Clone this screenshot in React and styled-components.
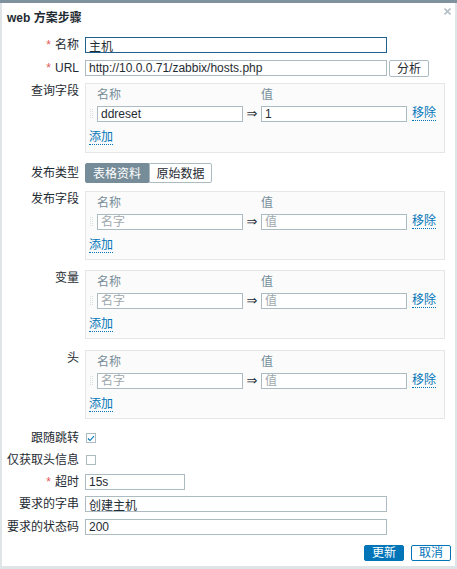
import React from "react";
import styled, { createGlobalStyle } from "styled-components";

const Global = createGlobalStyle`
  html, body { margin: 0; padding: 0; }
  body {
    background: #dfe4e7;
    font-family: "Liberation Sans", Arial, "Noto Sans CJK SC", sans-serif;
    font-size: 12px;
    color: #1f2c33;
  }
`;

const FONT = `"Liberation Sans", Arial, "Noto Sans CJK SC", sans-serif`;

const Page = styled.div`
  height: 569px;
  box-sizing: border-box;
  border-top: 3px solid #7f929d;
  padding: 0 2px 3px 2px;
  display: flex;
`;

const Dialog = styled.div`
  position: relative;
  width: 453px;
  height: 563px;
  box-sizing: border-box;
  background: #fff;
  padding: 8px 4px 5px 5px;
  display: flex;
  flex-direction: column;
`;

const Title = styled.h4`
  margin: 0;
  font-size: 12px;
  line-height: 14px;
  font-weight: bold;
  font-family: ${FONT};
  color: #1f2c33;
`;

const Close = styled.button`
  position: absolute;
  top: 4px;
  right: 3px;
  width: 9px;
  height: 9px;
  padding: 0;
  border: 0;
  background: transparent;
  display: flex;
  align-items: center;
  justify-content: center;
`;

const Row = styled.div`
  display: grid;
  grid-template-columns: 72px 1fr;
  column-gap: 6px;
  align-items: ${(p) => (p.$top ? "start" : "center")};
  margin-top: ${(p) => p.$mt}px;
  min-height: ${(p) => p.$h || 16}px;
`;

const Label = styled.label`
  text-align: right;
  line-height: 14px;
  white-space: nowrap;
  padding-top: ${(p) => p.$pt || 0}px;
  font-family: ${FONT};
`;

const Req = styled.span`
  color: #e45959;
  margin-right: 4px;
`;

const Field = styled.div`
  display: flex;
  align-items: flex-start;
  gap: 2px;
`;

const Input = styled.input`
  box-sizing: border-box;
  height: 16px;
  width: ${(p) => p.$w || 302}px;
  border: 1px solid ${(p) => (p.$focus ? "#1f6093" : "#acbbc2")};
  background: #fff;
  padding: 0 3px;
  margin: 0;
  font-family: ${FONT};
  font-size: 12px;
  color: #1f2c33;
  outline: none;
  &::placeholder { color: #a0a8ad; }
`;

const Btn = styled.button`
  box-sizing: border-box;
  height: ${(p) => p.$h || 16}px;
  width: 40px;
  padding: 0;
  border-radius: 2px;
  font-family: ${FONT};
  font-size: 12px;
  line-height: 14px;
  cursor: pointer;
  border: 1px solid ${(p) => (p.$variant ? "#0275b8" : "#acbbc2")};
  background: ${(p) => (p.$variant === "primary" ? "#0275b8" : "#fff")};
  color: ${(p) => (p.$variant === "primary" ? "#fff" : p.$variant === "outline" ? "#0275b8" : "#1f2c33")};
`;

const Box = styled.div`
  box-sizing: border-box;
  width: 360px;
  height: ${(p) => p.$h || 69}px;
  border: 1px solid #e3e7ea;
  background: #fbfbfb;
  padding: 4px 3px 0 3px;
`;

const Grid = styled.div`
  display: grid;
  grid-template-columns: 8px 146px 18px 146px auto;
  align-items: center;
`;

const Head = styled.span`
  color: #768d99;
  line-height: 14px;
  font-family: ${FONT};
`;

const DataRow = styled(Grid)`
  margin-top: 4px;
  height: 16px;
`;

const HandleWrap = styled.span`
  display: flex;
  align-items: center;
  padding-left: 1px;
`;

const Arrow = styled.span`
  text-align: center;
  font-size: 13px;
  line-height: 14px;
  color: #1f2c33;
  font-family: "DejaVu Sans", sans-serif;
`;

const Link = styled.a`
  display: inline-block;
  color: #0275b8;
  line-height: 13px;
  text-decoration: none;
  border-bottom: 1px dotted #0275b8;
  cursor: pointer;
  font-family: ${FONT};
`;

const Remove = styled(Link)`
  margin-left: 5px;
  justify-self: start;
`;

const AddWrap = styled.div`
  margin-top: 8px;
`;

const Toggle = styled.div`
  display: flex;
`;

const ToggleItem = styled.button`
  box-sizing: border-box;
  height: 20px;
  width: ${(p) => p.$w}px;
  padding: 0;
  font-family: ${FONT};
  font-size: 12px;
  border: 1px solid ${(p) => (p.$on ? "#768d99" : "#acbbc2")};
  background: ${(p) => (p.$on ? "#768d99" : "#fff")};
  color: ${(p) => (p.$on ? "#fff" : "#1f2c33")};
  border-radius: ${(p) => (p.$first ? "2px 0 0 2px" : "0 2px 2px 0")};
`;

const Check = styled.span`
  box-sizing: border-box;
  width: 10px;
  height: 10px;
  margin-left: 1px;
  border: 1px solid #acbbc2;
  background: #fff;
  display: flex;
  align-items: center;
  justify-content: center;
`;

const Footer = styled.div`
  margin-top: 10px;
  display: flex;
  justify-content: flex-end;
  gap: 7px;
`;

function Handle() {
  const dots = [];
  for (let r = 0; r < 5; r++) {
    for (let c = 0; c < 2; c++) {
      dots.push(<rect key={`${r}-${c}`} x={c * 2} y={r * 2} width="1" height="1" fill="#d8dde0" />);
    }
  }
  return (
    <HandleWrap>
      <svg width="4" height="10" viewBox="0 0 4 10">{dots}</svg>
    </HandleWrap>
  );
}

function PairBox({ rows, h }) {
  return (
    <Box $h={h}>
      <Grid>
        <span />
        <Head>名称</Head>
        <span />
        <Head>值</Head>
        <span />
      </Grid>
      {rows.map((r, i) => (
        <DataRow key={i}>
          <Handle />
          <Input $w={146} defaultValue={r.name} placeholder="名字" />
          <Arrow>⇒</Arrow>
          <Input $w={146} defaultValue={r.value} placeholder="值" />
          <Remove>移除</Remove>
        </DataRow>
      ))}
      <AddWrap>
        <Link>添加</Link>
      </AddWrap>
    </Box>
  );
}

export default function App() {
  return (
    <>
      <Global />
      <Page>
        <Dialog>
          <Title>web 方案步骤</Title>
          <Close aria-label="关闭">
            <svg width="7" height="7" viewBox="0 0 7 7">
              <path d="M0.5 0.5L6.5 6.5M6.5 0.5L0.5 6.5" stroke="#b4c0c7" strokeWidth="1.6" />
            </svg>
          </Close>

          <Row $mt={12}>
            <Label><Req>*</Req>名称</Label>
            <Field><Input $focus defaultValue="主机" /></Field>
          </Row>
          <Row $mt={7} $h={17} $top>
            <Label $pt={1}><Req>*</Req>URL</Label>
            <Field>
              <Input defaultValue="http://10.0.0.71/zabbix/hosts.php" />
              <Btn $h={17}>分析</Btn>
            </Field>
          </Row>
          <Row $mt={6} $top>
            <Label $pt={1}>查询字段</Label>
            <PairBox h={70} rows={[{ name: "ddreset", value: "1" }]} />
          </Row>
          <Row $mt={10}>
            <Label>发布类型</Label>
            <Toggle>
              <ToggleItem $on $first $w={64}>表格资料</ToggleItem>
              <ToggleItem $w={63}>原始数据</ToggleItem>
            </Toggle>
          </Row>
          <Row $mt={8} $top>
            <Label $pt={1}>发布字段</Label>
            <PairBox rows={[{ name: "", value: "" }]} />
          </Row>
          <Row $mt={11} $top>
            <Label $pt={1}>变量</Label>
            <PairBox rows={[{ name: "", value: "" }]} />
          </Row>
          <Row $mt={11} $top>
            <Label $pt={1}>头</Label>
            <PairBox rows={[{ name: "", value: "" }]} />
          </Row>
          <Row $mt={11}>
            <Label>跟随跳转</Label>
            <Check>
              <svg width="8" height="7" viewBox="0 0 8 7">
                <path d="M1 3.5L3 5.5L7 1.2" stroke="#0275b8" strokeWidth="1.1" fill="none" />
              </svg>
            </Check>
          </Row>
          <Row $mt={6}>
            <Label>仅获取头信息</Label>
            <Check />
          </Row>
          <Row $mt={6}>
            <Label><Req>*</Req>超时</Label>
            <Field><Input $w={100} defaultValue="15s" /></Field>
          </Row>
          <Row $mt={6}>
            <Label>要求的字串</Label>
            <Field><Input defaultValue="创建主机" /></Field>
          </Row>
          <Row $mt={7}>
            <Label>要求的状态码</Label>
            <Field><Input defaultValue="200" /></Field>
          </Row>
          <Footer>
            <Btn $variant="primary">更新</Btn>
            <Btn $variant="outline">取消</Btn>
          </Footer>
        </Dialog>
      </Page>
    </>
  );
}
